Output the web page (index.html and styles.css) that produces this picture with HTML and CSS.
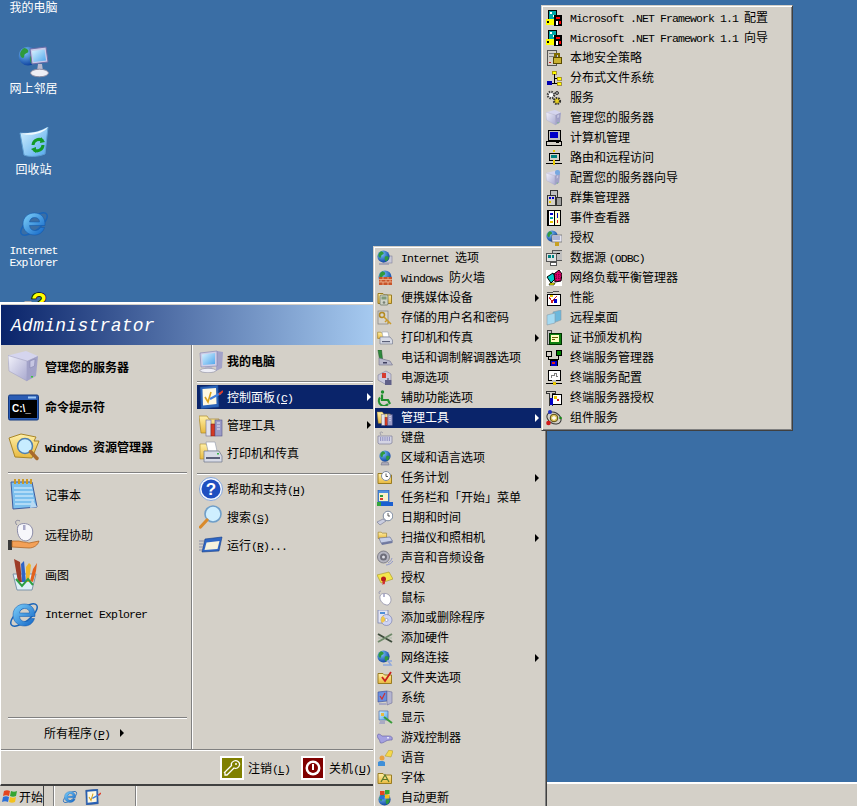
FILE: index.html
```html
<!DOCTYPE html>
<html lang="zh-CN">
<head>
    <meta charset="UTF-8">
    <meta name="viewport" content="width=device-width, initial-scale=1.0">
    <title>Windows Server 2003 开始菜单</title>
    <link rel="stylesheet" href="styles.css">
</head>
<body>
<svg class="defs" xmlns="http://www.w3.org/2000/svg">
    <defs>
        <radialGradient id="gGlobe" cx="35%" cy="30%" r="75%"><stop offset="0" stop-color="#7cc4f8"/><stop offset="1" stop-color="#0b3f9e"/></radialGradient>
        <linearGradient id="gIE" x1="0" y1="0" x2="1" y2="1"><stop offset="0" stop-color="#7fd2fb"/><stop offset="1" stop-color="#0f62c4"/></linearGradient>
        <linearGradient id="gLilac" x1="0" y1="0" x2="1" y2="1"><stop offset="0" stop-color="#f2f2fb"/><stop offset="1" stop-color="#a9a9cf"/></linearGradient>
        <linearGradient id="gScreen" x1="0" y1="0" x2="1" y2="1"><stop offset="0" stop-color="#d9f3ff"/><stop offset="1" stop-color="#4fa6ec"/></linearGradient>
        <linearGradient id="gFolder" x1="0" y1="0" x2="0" y2="1"><stop offset="0" stop-color="#fff0a8"/><stop offset="1" stop-color="#e8b93f"/></linearGradient>
    </defs>

    <!-- shared pieces -->
    <symbol id="globe" viewBox="0 0 16 16"><circle cx="8" cy="8" r="7.5" fill="url(#gGlobe)"/><path d="M5 1.5C7 2 9 3 8 5 7 6 5 6 5 8 5 10 3 10 2 8 1 5 3 2.5 5 1.5ZM10 8C12 7 14 8 14.5 9 14 12 12 14 10.5 14 9.5 12 9 9.5 10 8Z" fill="#2f9a3c"/></symbol>
    <symbol id="folder" viewBox="0 0 16 16"><path d="M1 13.500V3.500H6L7.500 5H14.500V13.500Z" fill="url(#gFolder)" stroke="#9a7c22"/></symbol>

    <!-- desktop and left column, 32px -->
    <symbol id="lg-net" viewBox="0 0 32 32"><use href="#globe" x="0" y="0" width="20" height="20"/><path d="M12 3L28 1 30 16 14 18Z" fill="#c9c9e8" stroke="#6d6da8"/><path d="M14 5L26.500 3.500 28 14.500 15.500 16Z" fill="url(#gScreen)"/><path d="M20 18H24L25 25H19Z" fill="#b8b8cc"/><ellipse cx="21.500" cy="27" rx="9" ry="3.800" fill="#eeeef5" stroke="#8a8aa0"/></symbol>
    <symbol id="lg-bin" viewBox="0 0 32 32"><path d="M2 6C12 7 22 5 30 0L27 27C20 30 10 30 6 28Z" fill="url(#gScreen)" stroke="#5f9fd2"/><path d="M2 6C12 7 22 5 30 0 26 7 10 10 2 6Z" fill="#eef9ff"/><path d="M15 18A6 6 0 0 1 25 14" fill="none" stroke="#139a26" stroke-width="3"/><path d="M25 18A6 6 0 0 1 16 23" fill="none" stroke="#139a26" stroke-width="3"/><path d="M23 10L27 15 22 16ZM18 26L13 22 18 20Z" fill="#139a26"/></symbol>
    <symbol id="lg-ie" viewBox="0 0 32 32"><ellipse cx="16" cy="16" rx="16" ry="6.500" transform="rotate(-38 16 16)" fill="none" stroke="#1a64b8" stroke-width="1.500"/><path fill-rule="evenodd" fill="url(#gIE)" stroke="#0e55a8" stroke-width=".5" d="M27 17.500H11.500C12 21 14 22.500 17 22.500 19.500 22.500 21.500 21.500 22.500 19.500H26.500C25 24.500 21 27 16.500 27 10 27 5 22.500 5 16 5 9.500 10 5 16.500 5 23 5 27.500 9.500 27 17.500ZM11.500 14H21.500C21.500 11 19.500 9.500 16.500 9.500 13.500 9.500 12 11.500 11.500 14Z"/></symbol>
    <symbol id="lg-help" viewBox="0 0 32 32"><rect x="6.500" y="12" width="7" height="20" fill="#a8a8a8"/></symbol>
    <symbol id="lg-server" viewBox="0 0 32 32"><path d="M0 4.500L18 0 30 5 19 10Z" fill="#d5d5ee"/><path d="M0 4.500L19 10V30L1 20Z" fill="url(#gLilac)" stroke="#9a9ac0" stroke-width=".5"/><path d="M19 10L30 5 28 25 19 30Z" fill="#a2a2c8"/><path d="M22 10L27 8 26.500 15 22 17Z" fill="#c6c6e2" stroke="#7f7fa8" stroke-width=".5"/><rect x="23" y="25" width="2" height="1.500" fill="#3bc43b"/></symbol>
    <symbol id="lg-cmd" viewBox="0 0 32 32"><rect x=".5" y="4" width="30" height="25" rx="1.500" fill="#2a5cb4" stroke="#153a80"/><rect x="2" y="9" width="27" height="18" fill="#000"/><rect x="20" y="5.500" width="8" height="2" fill="#9cc7f5"/></symbol>
    <symbol id="lg-explorer" viewBox="0 0 32 32"><path d="M1 7L13 3 28 6 26 10 31 10 24 27 7 26Z" fill="url(#gFolder)" stroke="#a98628"/><circle cx="17" cy="15" r="7.500" fill="#c7ecff" stroke="#4d7fb0" stroke-width="1.500"/><path d="M22.500 20.500L29 27.500" stroke="#a86a2c" stroke-width="3.500" stroke-linecap="round"/></symbol>
    <symbol id="lg-notepad" viewBox="0 0 32 32"><path d="M3 3H24L29 28 5 30Z" fill="#7cc0ee" stroke="#3d5da0"/><path d="M6 9H24M6 13H25M7 17H25M7 21H26M7 25H26" stroke="#e6f6ff"/><path d="M7 0V5M11 0V5M15 0V5M19 0V5M23 0V5" stroke="#c99a2a" stroke-width="2"/><path d="M24 20L29 28 22 29Z" fill="#b9d9f2"/></symbol>
    <symbol id="lg-assist" viewBox="0 0 32 32"><path d="M12 2C8 0 6 3 9 6" fill="none" stroke="#8a8a9c"/><path d="M10 7C13 3 22 4 24 9 26 14 24 21 18 22 11 22 8 13 10 7Z" fill="#f7f7fb" stroke="#8d8da8"/><rect x="15" y="6" width="2.500" height="5" fill="#a9a9c9"/><path d="M0 21H4V31H0Z" fill="#3a3a3a"/><path d="M4 22H11C13 23 18 23 21 24L31 22C30 26 26 29 21 29L4 28Z" fill="#f3a057" stroke="#a55c1c" stroke-width=".7"/></symbol>
    <symbol id="lg-paint" viewBox="0 0 32 32"><path d="M5 15H28L24 31H9Z" fill="#dfeff7" stroke="#7d94a8"/><path d="M6 0L12 3 14 23H10Z" fill="#9d3c28"/><path d="M13 5L16 2 18 23H14Z" fill="#2f64c7"/><path d="M18 23L18 8 21 4 23 6 21 23Z" fill="#f0b62c"/><path d="M22 22L25 10 29 4 28 12 25 23Z" fill="#e2621e"/><path d="M8 20L14 27 20 20 25 26" fill="none" stroke="#2ea043" stroke-width="2"/></symbol>

    <!-- right column, 24px -->
    <symbol id="md-computer" viewBox="0 0 24 24"><path d="M18 2L24 3 23 19 17 22Z" fill="#a2a2c8"/><path d="M1 4L18 2 18 17 2 18Z" fill="#cfcfe8" stroke="#7f7fae" stroke-width=".6"/><path d="M3 5.500L16 4 16 15 4 16Z" fill="url(#gScreen)"/><path d="M6 18H13L14 21H5Z" fill="#b6b6ca"/><ellipse cx="9" cy="21.500" rx="8" ry="2.200" fill="#eeeef6" stroke="#8a8aa0" stroke-width=".6"/></symbol>
    <symbol id="md-panel" viewBox="0 0 24 24"><path d="M1 2L19 0 20 22 2 24Z" fill="#2a63b8" stroke="#123c84" stroke-width=".6"/><path d="M3.500 4L17 3 17.500 19 4 20.500Z" fill="#fdf8e2"/><path d="M6 12L9 17 12 7" fill="none" stroke="#d9a21e" stroke-width="1.600"/><path d="M11 14L22 8" stroke="#3f7fdf" stroke-width="2"/><path d="M20 9.500L24 6" stroke="#e03d2a" stroke-width="2"/></symbol>
    <symbol id="md-tools" viewBox="0 0 24 24"><path d="M0 3H8L10 6H20V20H2Z" fill="url(#gFolder)" stroke="#a98628" stroke-width=".7"/><rect x="7" y="7" width="5" height="16" fill="#e2e2ec" stroke="#6d6d90" stroke-width=".6"/><rect x="12" y="11" width="4" height="12" fill="#d33a24" stroke="#7c1a10" stroke-width=".5"/><rect x="16" y="7" width="7" height="16" fill="#9a9ac6" stroke="#55558a" stroke-width=".6"/><path d="M18 10H21M18 13H21M18 16H21" stroke="#e6e6f5"/></symbol>
    <symbol id="md-printer" viewBox="0 0 24 24"><path d="M1 3H7L9 6V18H1Z" fill="url(#gFolder)" stroke="#a98628" stroke-width=".6"/><path d="M7 1H16L18 10H9Z" fill="#fff" stroke="#8d96a8" stroke-width=".6"/><path d="M5 10H20L23 15V21H5Z" fill="#d8dbe6" stroke="#6c7288" stroke-width=".7"/><rect x="7" y="16" width="14" height="2" fill="#5b6078"/><rect x="18" y="12" width="2" height="1.500" fill="#39b54a"/></symbol>
    <symbol id="md-help" viewBox="0 0 24 24"><circle cx="12" cy="12" r="11.500" fill="#f4f8ff" stroke="#6a94d8" stroke-width=".8"/><circle cx="12" cy="12" r="9.500" fill="#1f4fc0"/></symbol>
    <symbol id="md-search" viewBox="0 0 24 24"><circle cx="14" cy="9" r="8" fill="#cfefff" stroke="#6f9ec8" stroke-width="1.600"/><path d="M8 15L1.500 22" stroke="#d98a2c" stroke-width="3.200" stroke-linecap="round"/></symbol>
    <symbol id="md-run" viewBox="0 0 24 24"><path d="M6 6L23 4 20 18 3 19Z" fill="#2e66c4" stroke="#143c86" stroke-width=".6"/><path d="M7.500 9.500L20.500 8 18.500 16 5.500 17Z" fill="#f6f3de"/><path d="M0 8H5M0 11H4M0 14H4M0 17H3" stroke="#8a8fa8"/></symbol>
    <symbol id="key" viewBox="0 0 24 24"><rect width="24" height="24" fill="#fff"/><rect x="2" y="2" width="20" height="20" fill="#808000"/><path d="M14 5C17 4 20 6 19.500 9 19 12 16 13 14 12L7 19H5V17L4.500 16.500 11.500 9.500C11 7.500 12 5.700 14 5Z" fill="none" stroke="#fff" stroke-width="1.300"/><circle cx="16" cy="8" r="1" fill="#fff"/></symbol>
    <symbol id="power" viewBox="0 0 24 24"><rect width="24" height="24" fill="#fff"/><rect x="2" y="2" width="20" height="20" fill="#800000"/><circle cx="12" cy="12" r="7.500" fill="#fff"/><circle cx="12" cy="12" r="5" fill="#800000"/><rect x="11" y="8" width="2" height="6" fill="#fff"/></symbol>

    <!-- control panel list, 16px -->
    <symbol id="s-inet" viewBox="0 0 16 16"><rect x="6" y="6" width="9" height="7" fill="#c9c9d8" stroke="#7f7f9a" stroke-width=".6"/><use href="#globe" x="0" y="0" width="13" height="13"/><path d="M2 14H12" stroke="#9a9ab0" stroke-width="1.500"/></symbol>
    <symbol id="s-firewall" viewBox="0 0 16 16"><use href="#globe" x="1" y="0" width="14" height="14"/><rect x="2" y="7" width="13" height="8" fill="#c8542a"/><path d="M2 9.500H15M2 12H15M6 7V9.500M11 7V9.500M4 9.500V12M9 9.500V12M13 9.500V12M6 12V15M11 12V15" stroke="#f2c6a4" stroke-width=".7"/></symbol>
    <symbol id="s-media" viewBox="0 0 16 16"><use href="#folder"/><rect x="3" y="5" width="8" height="10" rx="1" fill="#cfd3c8" stroke="#5e6a5a" stroke-width=".7"/><rect x="4.500" y="6.500" width="5" height="3" fill="#7f9a78"/><circle cx="7" cy="12.500" r="1.300" fill="#7a8276"/></symbol>
    <symbol id="s-creds" viewBox="0 0 16 16"><rect x="1" y="1" width="10" height="13" fill="#d7d4cc" stroke="#7f7f7f" stroke-width=".7"/><circle cx="5" cy="5" r="2.500" fill="none" stroke="#b38a22" stroke-width="1.500"/><path d="M6.500 6.500L14 14M10 10L8 12M12 12L10.500 13.500" stroke="#c99a2a" stroke-width="1.500"/></symbol>
    <symbol id="s-printer" viewBox="0 0 16 16"><use href="#folder" width="10" height="10"/><path d="M5 2H11L12 7H6Z" fill="#fff" stroke="#8d96a8" stroke-width=".5"/><path d="M3 7H13L15.500 10V14H3Z" fill="#d8dbe6" stroke="#6c7288" stroke-width=".6"/><rect x="5" y="11" width="8" height="1.200" fill="#5b6078"/></symbol>
    <symbol id="s-phone" viewBox="0 0 16 16"><path d="M1 0H4.500L5.500 9H2.500Z" fill="#2e8a3c" stroke="#14501e" stroke-width=".5"/><path d="M2 8L13 11 15.500 15H2Z" fill="#b9b9cc" stroke="#6f6f8c" stroke-width=".6"/><rect x="6" y="12" width="4" height="1.500" fill="#3f3f5f"/></symbol>
    <symbol id="s-power" viewBox="0 0 16 16"><path d="M1 5L9 1 14 4 14 10 8 14 1 10Z" fill="#c9c9dc" stroke="#7c7c98" stroke-width=".6"/><rect x="5" y="3" width="4" height="5" fill="#d63c30"/><path d="M8 10H14.500V15H8Z" fill="#5f5f88"/><path d="M11 8V10" stroke="#3c3c50"/></symbol>
    <symbol id="s-access" viewBox="0 0 16 16"><circle cx="5.500" cy="2" r="1.700" fill="#1f8f2e"/><path d="M5 4.500V10H11L13 14" fill="none" stroke="#1f8f2e" stroke-width="2.200"/><path d="M3 7.500A5 5 0 1 0 11 14" fill="none" stroke="#1f8f2e" stroke-width="2"/></symbol>
    <symbol id="s-kbd" viewBox="0 0 16 16"><path d="M6 3C4 1 2 2 4 5" fill="none" stroke="#9a9aa8"/><path d="M1 6H15V13L13 14H2L1 13Z" fill="#d4d4e4" stroke="#7b7b98" stroke-width=".7"/><path d="M3 8H13M3 10H13" stroke="#5c5ca8" stroke-width="1.200" stroke-dasharray="1 .8"/></symbol>
    <symbol id="s-region" viewBox="0 0 16 16"><use href="#globe" x="2" y="0" width="12" height="12"/><path d="M5 12H11L12 15H4Z" fill="#a9a9b8" stroke="#6e6e80" stroke-width=".5"/></symbol>
    <symbol id="s-tasks" viewBox="0 0 16 16"><use href="#folder"/><circle cx="9" cy="6" r="4.500" fill="#fff" stroke="#7c8aa0"/><path d="M9 3.500V6.500H11" stroke="#333" fill="none" stroke-width=".8"/></symbol>
    <symbol id="s-taskbar" viewBox="0 0 16 16"><rect x="1" y="0" width="11" height="12" fill="#4d8fe0" stroke="#22509a" stroke-width=".6"/><rect x="2" y="3" width="9" height="8" fill="#f8f1c8"/><rect x="3" y="5" width="3" height="2" fill="#2f9a3c"/><rect x="3" y="8" width="3" height="2" fill="#d63c30"/><rect x="0" y="12" width="16" height="4" fill="#1b5fd0"/><rect x="0" y="12" width="4" height="4" fill="#31a53c"/></symbol>
    <symbol id="s-clock" viewBox="0 0 16 16"><circle cx="11" cy="6" r="4.800" fill="#fff" stroke="#7c8aa0"/><path d="M11 3V6H13" fill="none" stroke="#333" stroke-width=".8"/><path d="M0 12L6 9 9 11 3 15Z" fill="#c9cde0" stroke="#6f7390" stroke-width=".6"/></symbol>
    <symbol id="s-scanner" viewBox="0 0 16 16"><use href="#folder" width="11" height="10"/><path d="M2 8L13 7 15.500 11 4 13Z" fill="#c6cfe8" stroke="#5f6a90" stroke-width=".6"/><path d="M4 13L15.500 11V13L5 15Z" fill="#6f78a0"/></symbol>
    <symbol id="s-sound" viewBox="0 0 16 16"><circle cx="6.500" cy="7" r="6" fill="#b4b4c0" stroke="#63636f" stroke-width=".7"/><circle cx="6.500" cy="7" r="3.500" fill="#6e6e7a"/><circle cx="6.500" cy="7" r="1.500" fill="#dcdce4"/><path d="M11 13C13 12 14.500 10 15 8M9 15C12 15 15 13 15.800 11" fill="none" stroke="#7c86c8" stroke-width=".8"/></symbol>
    <symbol id="s-cert" viewBox="0 0 16 16"><path d="M0 5L12 2 16 9 4 13Z" fill="#f4e64c" stroke="#a49424" stroke-width=".6"/><circle cx="6.500" cy="9" r="2.500" fill="#b61c1c"/><path d="M5.500 11V15L7.500 13.500 8 15V11" fill="#d03030"/></symbol>
    <symbol id="s-mouse" viewBox="0 0 16 16"><path d="M4 1C2 1 1.500 2.500 2.500 4" fill="none" stroke="#9a9ab0"/><path d="M3 6C4 3 9 2.500 12 5 15 8 14.500 13 11 15 7 15.500 2 11 3 6Z" fill="#fff" stroke="#8f8fa8" stroke-width=".8"/><rect x="6" y="4" width="2" height="3" fill="#b5b5d0"/></symbol>
    <symbol id="s-addrem" viewBox="0 0 16 16"><rect x="1" y="0" width="10" height="13" fill="#e4e4f2" stroke="#6c78a8" stroke-width=".7"/><rect x="3" y="2" width="5" height="2" fill="#4f8fd8"/><circle cx="9.500" cy="10" r="5.500" fill="#cfd4f2" stroke="#6f74a8" stroke-width=".6"/><path d="M9.500 10L6 5.800A5.500 5.500 0 0 0 5 13Z" fill="#f2c84a"/><circle cx="9.500" cy="10" r="1.500" fill="#fff" stroke="#6f74a8" stroke-width=".5"/></symbol>
    <symbol id="s-hw" viewBox="0 0 16 16"><path d="M1 4L15 12" stroke="#3e4c3c" stroke-width="2"/><path d="M1 12L15 4" stroke="#6f8a6a" stroke-width="2"/><path d="M1 8H5M11 8H15" stroke="#a8b8a4"/></symbol>
    <symbol id="s-netconn" viewBox="0 0 16 16"><use href="#globe" x="0" y="0" width="13" height="13"/><path d="M6 15H14L11 11H15" fill="none" stroke="#8fa8dc" stroke-width="1.500"/></symbol>
    <symbol id="s-folderopt" viewBox="0 0 16 16"><use href="#folder"/><path d="M5 7L8 11 14 2" fill="none" stroke="#c8201c" stroke-width="1.800"/></symbol>
    <symbol id="s-system" viewBox="0 0 16 16"><path d="M1 2L10 1V11L1 12Z" fill="#6a8fe0" stroke="#3a4a90" stroke-width=".6"/><path d="M3 6L5 9 8 3" fill="none" stroke="#d03030" stroke-width="1.200"/><path d="M10 1L15 2V13L10 15Z" fill="#b5b5d0" stroke="#6e6e98" stroke-width=".6"/><path d="M2 13H9V15H2Z" fill="#a9a9c4"/></symbol>
    <symbol id="s-display" viewBox="0 0 16 16"><path d="M2 1H11V10H2Z" fill="url(#gScreen)" stroke="#4f6fae" stroke-width=".7"/><rect x="4" y="3" width="3" height="3" fill="#e8b93f"/><path d="M7 7L15 13" stroke="#3a9c3a" stroke-width="2"/><path d="M3 11H8V14H2Z" fill="#a9a9c4"/></symbol>
    <symbol id="s-game" viewBox="0 0 16 16"><path d="M0 6C1 3 3 4 5 6H12C14 6 16 7 15 10 13 10 11 10 9 11 6 13 3 14 3 12 3 10 1 9 0 6Z" fill="#a4a0e0" stroke="#5f5ba0" stroke-width=".6"/><rect x="10" y="7" width="2" height="1.500" fill="#e6e6fa"/></symbol>
    <symbol id="s-speech" viewBox="0 0 16 16"><circle cx="5" cy="8" r="2.500" fill="#e8a040"/><path d="M1 16V12C2 10.500 7 10.500 8 12V16Z" fill="#3f8fd8"/><path d="M8 6L12 0 16 1 14 7Z" fill="#f4d84c" stroke="#a8922a" stroke-width=".5"/></symbol>
    <symbol id="s-fonts" viewBox="0 0 16 16"><use href="#folder"/><path d="M4 12L8 5 12 12M6 9.500H10" fill="none" stroke="#5a7a2a" stroke-width="1.200"/></symbol>
    <symbol id="s-update" viewBox="0 0 16 16"><use href="#globe" x="1" y="3" width="13" height="13"/><rect x="3" y="1" width="4.500" height="4" fill="#e3451f"/><rect x="8" y="0" width="4.500" height="4" fill="#35a533"/><rect x="3" y="5.500" width="4.500" height="4" fill="#2a6fd8"/><rect x="8" y="4.500" width="4.500" height="4" fill="#f4c21d"/></symbol>

    <!-- administrative tools list, 16 colour look -->
    <symbol id="o-net" viewBox="0 0 16 16" shape-rendering="crispEdges"><rect x="2" y="0" width="8" height="9" fill="#00a8a8" stroke="#000"/><rect x="4" y="2" width="2" height="2" fill="#fff"/><rect x="7" y="5" width="2" height="2" fill="#fff"/><rect x="0" y="9" width="8" height="6" fill="#ff0"/><rect x="8" y="5" width="8" height="11" fill="#000"/><rect x="10" y="7" width="4" height="2" fill="#f00"/><rect x="10" y="11" width="2" height="4" fill="#fff"/><rect x="13" y="11" width="2" height="3" fill="#f00"/><rect x="1" y="11" width="2" height="2" fill="#000"/></symbol>
    <symbol id="o-seclocal" viewBox="0 0 16 16" shape-rendering="crispEdges"><rect x="1" y="0" width="9" height="15" fill="#d4d0c8" stroke="#555"/><rect x="3" y="12" width="2" height="1" fill="#d02020"/><path d="M3 3H8M3 6H8" stroke="#808080"/><rect x="7" y="7" width="8" height="6" fill="#c8b030" stroke="#5a4a00"/><path d="M9 7V4H13V7" fill="none" stroke="#806c00" stroke-width="1.500"/></symbol>
    <symbol id="o-dfs" viewBox="0 0 16 16" shape-rendering="crispEdges"><rect x="1" y="11" width="5" height="4" fill="#0000b0"/><rect x="6" y="1" width="4" height="3" fill="#ff0" stroke="#806000" stroke-width=".6"/><rect x="11" y="7" width="4" height="3" fill="#ff0" stroke="#806000" stroke-width=".6"/><rect x="11" y="12" width="4" height="3" fill="#ff0" stroke="#806000" stroke-width=".6"/><path d="M8 4V13H11M8 8.500H11M6 13H8" stroke="#000" fill="none"/></symbol>
    <symbol id="o-svc" viewBox="0 0 16 16"><circle cx="5" cy="5" r="3.200" fill="#fff" stroke="#444" stroke-width="2.200" stroke-dasharray="1.500 1"/><circle cx="11" cy="11" r="3" fill="#e8d020" stroke="#333" stroke-width="2.200" stroke-dasharray="1.500 1"/><circle cx="11" cy="3" r="1.500" fill="#aaa" stroke="#333"/></symbol>
    <symbol id="o-compmgmt" viewBox="0 0 16 16" shape-rendering="crispEdges"><rect x="2" y="0" width="12" height="10" fill="#c0c0c0" stroke="#000"/><rect x="4" y="2" width="8" height="6" fill="#0000c8"/><rect x="0" y="11" width="15" height="4" fill="#d4d0c8" stroke="#000"/><rect x="10" y="12" width="3" height="1" fill="#000"/></symbol>
    <symbol id="o-route" viewBox="0 0 16 16" shape-rendering="crispEdges"><rect x="7" y="0" width="2" height="2" fill="#e8c800"/><rect x="3" y="3" width="10" height="7" fill="#d4d0c8" stroke="#000"/><rect x="5" y="5" width="6" height="3" fill="#008080"/><rect x="0" y="13" width="16" height="1" fill="#000"/><rect x="7" y="10" width="2" height="5" fill="#e8c800"/></symbol>
    <symbol id="o-srvwiz" viewBox="0 0 16 16"><use href="#lg-server" width="15" height="15" y="1"/><rect x="9" y="0" width="5" height="5" rx="2" fill="#78a8e0"/></symbol>
    <symbol id="o-cluster" viewBox="0 0 16 16" shape-rendering="crispEdges"><rect x="4" y="0" width="7" height="7" fill="#c0c0c0" stroke="#333"/><rect x="1" y="5" width="8" height="10" fill="#d4d0c8" stroke="#333"/><rect x="3" y="7" width="2" height="2" fill="#0000c8"/><rect x="6" y="7" width="2" height="2" fill="#0000c8"/><rect x="3" y="11" width="2" height="2" fill="#e8c800"/><rect x="10" y="7" width="5" height="8" fill="#a0a0a0" stroke="#333"/></symbol>
    <symbol id="o-event" viewBox="0 0 16 16" shape-rendering="crispEdges"><rect x="1" y="0" width="14" height="16" fill="#000"/><rect x="3" y="1" width="5" height="14" fill="#fff"/><rect x="9" y="1" width="5" height="14" fill="#ffffd0"/><rect x="4" y="3" width="3" height="2" fill="#0000d0"/><rect x="4" y="7" width="3" height="2" fill="#00a0a0"/><rect x="4" y="11" width="3" height="2" fill="#e8c800"/><rect x="11" y="3" width="1" height="5" fill="#0000d0"/><rect x="11" y="10" width="1" height="3" fill="#d02020"/></symbol>
    <symbol id="o-lic" viewBox="0 0 16 16"><use href="#globe" width="12" height="12"/><rect x="6" y="5" width="10" height="7" fill="#e4e4f0" stroke="#555" stroke-width=".6"/><path d="M7 7H14M7 9H14" stroke="#4860a8" stroke-width=".7"/><rect x="9" y="12" width="4" height="4" fill="#c8a020"/></symbol>
    <symbol id="o-odbc" viewBox="0 0 16 16" shape-rendering="crispEdges"><rect x="6" y="0" width="10" height="10" fill="#c0c0c0" stroke="#555"/><rect x="0" y="3" width="10" height="8" fill="#e0e0e0" stroke="#555"/><rect x="2" y="5" width="3" height="3" fill="#008080"/><rect x="6" y="5" width="2" height="3" fill="#008080"/><rect x="4" y="12" width="6" height="3" fill="#fff" stroke="#555"/><rect x="11" y="3" width="3" height="1" fill="#000"/></symbol>
    <symbol id="o-nlb" viewBox="0 0 16 16"><rect width="16" height="16" fill="#fff"/><path d="M1 7L7 3 10 8 5 13Z" fill="#00c8c8" stroke="#000"/><path d="M8 4L13 0 16 4 15 11 9 12Z" fill="#e0006c" stroke="#000"/><path d="M10 2V11M13 2V11M8 5H15M8 8H15" stroke="#000" stroke-width=".5" stroke-dasharray="1 1"/><path d="M4 13L9 13 8 15H3Z" fill="#ff0" stroke="#000" stroke-width=".6"/></symbol>
    <symbol id="o-perf" viewBox="0 0 16 16" shape-rendering="crispEdges"><path d="M1 3L13 1" stroke="#555"/><rect x="1" y="4" width="13" height="11" fill="#fff" stroke="#000"/><path d="M3 7L7 13M11 6L5 13" stroke="#d02020"/><rect x="8" y="9" width="3" height="4" fill="#0000c8"/><rect x="4" y="5" width="3" height="2" fill="#e8c800"/></symbol>
    <symbol id="o-rdp" viewBox="0 0 16 16"><path d="M7 2L15 0V10L7 13Z" fill="#6cb8dc" stroke="#8a9ca8" stroke-width=".6"/><path d="M1 5L9 3V13L1 15Z" fill="#a4daf2" stroke="#8a9ca8" stroke-width=".6"/></symbol>
    <symbol id="o-ca" viewBox="0 0 16 16" shape-rendering="crispEdges"><rect x="1" y="0" width="4" height="14" fill="#c0c0c0" stroke="#444"/><rect x="3" y="3" width="12" height="11" fill="#108010" stroke="#003000"/><rect x="5" y="5" width="8" height="7" fill="#ffffc0"/><path d="M6 7H12M6 9H9" stroke="#606000"/></symbol>
    <symbol id="o-tsm" viewBox="0 0 16 16" shape-rendering="crispEdges"><rect x="0" y="1" width="5" height="5" fill="#d4d0c8" stroke="#000"/><rect x="10" y="0" width="5" height="5" fill="#008000" stroke="#000"/><path d="M2 6V9H12V5M7 9V11" stroke="#000" fill="none"/><rect x="4" y="10" width="7" height="6" fill="#0000c8" stroke="#000"/><rect x="6" y="12" width="3" height="2" fill="#e02020"/></symbol>
    <symbol id="o-tsc" viewBox="0 0 16 16" shape-rendering="crispEdges"><rect x="2" y="0" width="12" height="10" fill="#fff" stroke="#000"/><path d="M5 8V5H8V3H10V6H12" stroke="#808080" fill="none"/><rect x="0" y="13" width="16" height="1" fill="#000"/><rect x="6" y="10" width="4" height="3" fill="#c0c0c0"/><rect x="7" y="12" width="3" height="3" fill="#e8c800"/></symbol>
    <symbol id="o-tsl" viewBox="0 0 16 16" shape-rendering="crispEdges"><path d="M0 1H9V3H6V16H3V3H0Z" fill="#d4d0c8" stroke="#333"/><rect x="6" y="4" width="9" height="10" fill="#fff" stroke="#000"/><rect x="8" y="6" width="3" height="3" fill="#e8c800"/><rect x="4" y="8" width="3" height="7" fill="#0000c8"/><rect x="11" y="9" width="2" height="2" fill="#d02020"/></symbol>
    <symbol id="o-com" viewBox="0 0 16 16"><ellipse cx="8" cy="8" rx="7.500" ry="5.500" transform="rotate(30 8 8)" fill="none" stroke="#333"/><circle cx="8" cy="8" r="3.800" fill="#e0c860" stroke="#5a4a10"/><path d="M8 6V10M6 8H10" stroke="#fff" stroke-width="1.300"/><circle cx="4" cy="2" r="2" fill="#2030c0"/><circle cx="2.500" cy="13" r="2.300" fill="#d01818"/><circle cx="14.500" cy="8" r="1.300" fill="#148a14"/></symbol>
    <symbol id="flag" viewBox="0 0 16 16"><path d="M2 2C4 1 6 1 8 2L7 7C5 6 3 6 1 7Z" fill="#e3451f"/><path d="M9 2C11 3 13 3 15 2L14 7C12 8 10 8 8 7Z" fill="#35a533"/><path d="M1 8C3 7 5 7 7 8L6 13C4 12 2 12 0 13Z" fill="#2a6fd8"/><path d="M8 8C10 9 12 9 14 8L13 13C11 14 9 14 7 13Z" fill="#f4c21d"/></symbol>
</svg>

<div class="desktop">
    <div class="shortcuts">
        <div class="shortcut shortcut-top"><span>我的电脑</span></div>
        <div class="shortcut"><svg class="ico32"><use href="#lg-net"/></svg><span>网上邻居</span></div>
        <div class="shortcut"><svg class="ico32"><use href="#lg-bin"/></svg><span>回收站</span></div>
        <div class="shortcut"><svg class="ico32"><use href="#lg-ie"/></svg><span class="lat twoline">Internet Explorer</span></div>
        <div class="shortcut"><svg class="ico32"><use href="#lg-help"/><text x="13" y="22" class="helpmark">?</text></svg></div>
    </div>

    <div class="taskbar">
        <div class="startbtn"><svg class="ico16"><use href="#flag"/></svg><span>开始</span></div>
        <div class="grip"></div>
        <div class="quick">
            <svg class="ico16"><use href="#lg-ie"/></svg>
            <svg class="ico16"><use href="#md-panel"/></svg>
        </div>
        <div class="grip"></div>
    </div>

    <div class="startmenu">
        <div class="banner">Administrator</div>
        <div class="panes">
            <div class="pane-left">
                <div class="prog strong"><svg class="ico32"><use href="#lg-server"/></svg><span>管理您的服务器</span></div>
                <div class="prog strong"><svg class="ico32"><use href="#lg-cmd"/><text x="4" y="21" class="cmdmark">C:\_</text></svg><span>命令提示符</span></div>
                <div class="prog strong"><svg class="ico32"><use href="#lg-explorer"/></svg><span><span class="lat">Windows </span>资源管理器</span></div>
                <div class="rule rule-prog"></div>
                <div class="prog"><svg class="ico32"><use href="#lg-notepad"/></svg><span>记事本</span></div>
                <div class="prog"><svg class="ico32"><use href="#lg-assist"/></svg><span>远程协助</span></div>
                <div class="prog"><svg class="ico32"><use href="#lg-paint"/></svg><span>画图</span></div>
                <div class="prog"><svg class="ico32"><use href="#lg-ie"/></svg><span class="lat">Internet Explorer</span></div>
                <div class="rule rule-all"></div>
                <div class="allprogs"><span>所有程序<span class="lat">(<u>P</u>)</span></span><i class="tri"></i></div>
            </div>
            <div class="pane-right">
                <div class="place strong"><svg class="ico24"><use href="#md-computer"/></svg><span>我的电脑</span></div>
                <div class="rule"></div>
                <div class="place on"><svg class="ico24"><use href="#md-panel"/></svg><span>控制面板<span class="lat">(<u>C</u>)</span></span><i class="tri"></i></div>
                <div class="place"><svg class="ico24"><use href="#md-tools"/></svg><span>管理工具</span><i class="tri"></i></div>
                <div class="place"><svg class="ico24"><use href="#md-printer"/></svg><span>打印机和传真</span></div>
                <div class="rule"></div>
                <div class="place"><svg class="ico24"><use href="#md-help"/><text x="12" y="18" class="helpglyph">?</text></svg><span>帮助和支持<span class="lat">(<u>H</u>)</span></span></div>
                <div class="place"><svg class="ico24"><use href="#md-search"/></svg><span>搜索<span class="lat">(<u>S</u>)</span></span></div>
                <div class="place"><svg class="ico24"><use href="#md-run"/></svg><span>运行<span class="lat">(<u>R</u>)...</span></span></div>
            </div>
        </div>
        <div class="logoff">
            <div class="logoff-btn"><svg class="ico24"><use href="#key"/></svg><span>注销<span class="lat">(<u>L</u>)</span></span></div>
            <div class="logoff-btn"><svg class="ico24"><use href="#power"/></svg><span>关机<span class="lat">(<u>U</u>)</span></span></div>
        </div>
    </div>

    <ul class="menu menu-panel">
        <li><svg class="ico16"><use href="#s-inet"/></svg><span><span class="lat">Internet </span>选项</span></li>
        <li><svg class="ico16"><use href="#s-firewall"/></svg><span><span class="lat">Windows </span>防火墙</span></li>
        <li><svg class="ico16"><use href="#s-media"/></svg><span>便携媒体设备</span><i class="tri"></i></li>
        <li><svg class="ico16"><use href="#s-creds"/></svg><span>存储的用户名和密码</span></li>
        <li><svg class="ico16"><use href="#s-printer"/></svg><span>打印机和传真</span><i class="tri"></i></li>
        <li><svg class="ico16"><use href="#s-phone"/></svg><span>电话和调制解调器选项</span></li>
        <li><svg class="ico16"><use href="#s-power"/></svg><span>电源选项</span></li>
        <li><svg class="ico16"><use href="#s-access"/></svg><span>辅助功能选项</span></li>
        <li class="on"><svg class="ico16"><use href="#md-tools"/></svg><span>管理工具</span><i class="tri"></i></li>
        <li><svg class="ico16"><use href="#s-kbd"/></svg><span>键盘</span></li>
        <li><svg class="ico16"><use href="#s-region"/></svg><span>区域和语言选项</span></li>
        <li><svg class="ico16"><use href="#s-tasks"/></svg><span>任务计划</span><i class="tri"></i></li>
        <li><svg class="ico16"><use href="#s-taskbar"/></svg><span>任务栏和「开始」菜单</span></li>
        <li><svg class="ico16"><use href="#s-clock"/></svg><span>日期和时间</span></li>
        <li><svg class="ico16"><use href="#s-scanner"/></svg><span>扫描仪和照相机</span><i class="tri"></i></li>
        <li><svg class="ico16"><use href="#s-sound"/></svg><span>声音和音频设备</span></li>
        <li><svg class="ico16"><use href="#s-cert"/></svg><span>授权</span></li>
        <li><svg class="ico16"><use href="#s-mouse"/></svg><span>鼠标</span></li>
        <li><svg class="ico16"><use href="#s-addrem"/></svg><span>添加或删除程序</span></li>
        <li><svg class="ico16"><use href="#s-hw"/></svg><span>添加硬件</span></li>
        <li><svg class="ico16"><use href="#s-netconn"/></svg><span>网络连接</span><i class="tri"></i></li>
        <li><svg class="ico16"><use href="#s-folderopt"/></svg><span>文件夹选项</span></li>
        <li><svg class="ico16"><use href="#s-system"/></svg><span>系统</span></li>
        <li><svg class="ico16"><use href="#s-display"/></svg><span>显示</span></li>
        <li><svg class="ico16"><use href="#s-game"/></svg><span>游戏控制器</span></li>
        <li><svg class="ico16"><use href="#s-speech"/></svg><span>语音</span></li>
        <li><svg class="ico16"><use href="#s-fonts"/></svg><span>字体</span></li>
        <li><svg class="ico16"><use href="#s-update"/></svg><span>自动更新</span></li>
    </ul>

    <ul class="menu menu-admin">
        <li><svg class="ico16"><use href="#o-net"/></svg><span><span class="lat">Microsoft .NET Framework 1.1 </span>配置</span></li>
        <li><svg class="ico16"><use href="#o-net"/></svg><span><span class="lat">Microsoft .NET Framework 1.1 </span>向导</span></li>
        <li><svg class="ico16"><use href="#o-seclocal"/></svg><span>本地安全策略</span></li>
        <li><svg class="ico16"><use href="#o-dfs"/></svg><span>分布式文件系统</span></li>
        <li><svg class="ico16"><use href="#o-svc"/></svg><span>服务</span></li>
        <li><svg class="ico16"><use href="#lg-server"/></svg><span>管理您的服务器</span></li>
        <li><svg class="ico16"><use href="#o-compmgmt"/></svg><span>计算机管理</span></li>
        <li><svg class="ico16"><use href="#o-route"/></svg><span>路由和远程访问</span></li>
        <li><svg class="ico16"><use href="#o-srvwiz"/></svg><span>配置您的服务器向导</span></li>
        <li><svg class="ico16"><use href="#o-cluster"/></svg><span>群集管理器</span></li>
        <li><svg class="ico16"><use href="#o-event"/></svg><span>事件查看器</span></li>
        <li><svg class="ico16"><use href="#o-lic"/></svg><span>授权</span></li>
        <li><svg class="ico16"><use href="#o-odbc"/></svg><span>数据源 <span class="lat">(ODBC)</span></span></li>
        <li><svg class="ico16"><use href="#o-nlb"/></svg><span>网络负载平衡管理器</span></li>
        <li><svg class="ico16"><use href="#o-perf"/></svg><span>性能</span></li>
        <li><svg class="ico16"><use href="#o-rdp"/></svg><span>远程桌面</span></li>
        <li><svg class="ico16"><use href="#o-ca"/></svg><span>证书颁发机构</span></li>
        <li><svg class="ico16"><use href="#o-tsm"/></svg><span>终端服务管理器</span></li>
        <li><svg class="ico16"><use href="#o-tsc"/></svg><span>终端服务配置</span></li>
        <li><svg class="ico16"><use href="#o-tsl"/></svg><span>终端服务器授权</span></li>
        <li><svg class="ico16"><use href="#o-com"/></svg><span>组件服务</span></li>
    </ul>
</div>
</body>
</html>
```

FILE: styles.css
```css
html, body {
    margin: 0;
    height: 100%;
    overflow: hidden;
}
body {
    font-family: "Noto Sans CJK SC", "Liberation Sans", sans-serif;
    font-size: 12px;
    line-height: 12px;
    color: #000;
}
svg { display: block; flex: none; overflow: visible; }
.defs { position: absolute; width: 0; height: 0; }
.ico32 { width: 32px; height: 32px; }
.ico24 { width: 24px; height: 24px; }
.ico16 { width: 16px; height: 16px; }

/* svg text */
.cmdmark { font: bold 10px "Liberation Sans", sans-serif; fill: #fff; }
.helpglyph { font: bold 17px "Liberation Sans", sans-serif; fill: #fff; text-anchor: middle; }
.helpmark { font: bold 26px "Liberation Sans", sans-serif; fill: #ff0; stroke: #000; stroke-width: 1.5px; paint-order: stroke; }

/* latin runs, half a cjk cell wide */
.lat {
    font-family: "Liberation Mono", monospace;
    font-size: 11.5px;
    line-height: 0;
    letter-spacing: -.9px;
}

.desktop {
    position: relative;
    width: 857px;
    height: 806px;
    background: #3a6ea5;
    overflow: hidden;
}

/* desktop icons */
.shortcuts {
    position: absolute;
    top: 1px;
    left: 0;
    width: 67px;
}
.shortcut {
    height: 81px;
    display: flex;
    flex-direction: column;
    align-items: center;
    gap: 4px;
    color: #fff;
    text-align: center;
}
.shortcut-top { height: 45px; }
.twoline {
    display: block;
    width: 50px;
    margin-top: 1px;
    line-height: 12px;
}

/* taskbar */
.taskbar {
    position: absolute;
    left: 0;
    right: 0;
    bottom: 0;
    height: 24px;
    box-sizing: border-box;
    background: #d4d0c8;
    border-top: 2px solid #fff;
    padding-top: 2px;
    display: flex;
}
.startbtn {
    width: 44px;
    height: 20px;
    box-sizing: border-box;
    padding: 2px 0 0 2px;
    display: flex;
    align-items: center;
    gap: 1px;
    border-right: 1px solid #404040;
}
.grip {
    width: 0;
    height: 20px;
    border-left: 1px solid #808080;
    border-right: 1px solid #fff;
    margin-left: 9px;
}
.quick {
    width: 64px;
    margin-left: 7px;
    padding-top: 1px;
    display: flex;
    align-items: center;
    gap: 7px;
}

/* start menu */
.startmenu {
    position: absolute;
    left: 0;
    top: 302px;
    width: 373px;
    height: 484px;
    box-sizing: border-box;
    padding-top: 1px;
    background: #d4d0c8;
    border-top: 2px solid #fff;
    border-left: 1px solid #fff;
    border-bottom: 2px solid #404040;
    display: flex;
    flex-direction: column;
}
.banner {
    flex: none;
    height: 40px;
    padding-left: 10px;
    background: linear-gradient(to right, #0a246a, #a6caf0);
    color: #fff;
    font: italic 18px/43px "Liberation Mono", monospace;
    letter-spacing: .27px;
}
.panes {
    flex: none;
    height: 404px;
    display: flex;
    border-bottom: 1px solid #808080;
    box-shadow: 0 1px #fff;
}
.rule {
    flex: none;
    height: 1px;
    background: #808080;
    border-bottom: 1px solid #fff;
}
.pane-left {
    width: 191px;
    box-sizing: border-box;
    padding: 6px 4px 4px 7px;
    border-right: 1px solid #808080;
    display: flex;
    flex-direction: column;
    gap: 8px;
}
.rule-prog { margin: 1px 0 -3px; }
.rule-all { margin: auto 0 -6px; }
.prog {
    height: 32px;
    flex: none;
    display: flex;
    align-items: center;
    gap: 5px;
}
.strong { font-weight: 700; }
.allprogs {
    height: 24px;
    flex: none;
    padding-left: 36px;
    display: flex;
    align-items: center;
    gap: 10px;
}
.pane-right {
    flex: 1;
    box-sizing: border-box;
    padding: 4px 0 0 4px;
    border-left: 1px solid #fff;
    display: flex;
    flex-direction: column;
    gap: 4px;
}
.pane-right .rule { margin: 4px 0 -2px; }
.place {
    height: 24px;
    flex: none;
    padding: 0 2px;
    display: flex;
    align-items: center;
    gap: 4px;
}
.on {
    background: #0a246a;
    color: #fff;
}
.tri {
    flex: none;
    width: 0;
    height: 0;
    border-left: 4px solid currentColor;
    border-top: 4px solid transparent;
    border-bottom: 4px solid transparent;
}
.place .tri { margin-left: auto; }
.logoff {
    flex: 1;
    margin-top: 1px;
    padding-right: 2px;
    display: flex;
    justify-content: flex-end;
    align-items: center;
    gap: 11px;
}
.logoff-btn {
    display: flex;
    align-items: center;
    gap: 4px;
}

/* cascading menus */
.menu {
    position: absolute;
    margin: 0;
    padding: 1px;
    list-style: none;
    box-sizing: border-box;
    background: #d4d0c8;
    border: 1px solid;
    border-color: #d4d0c8 #404040 #404040 #d4d0c8;
    box-shadow: inset 1px 1px #fff, inset -1px -1px #808080;
}
.menu li {
    height: 20px;
    display: flex;
    align-items: center;
    gap: 8px;
    padding: 0 6px 0 2px;
}
.menu li > span { margin-bottom: 2px; }
.menu .tri { margin-left: auto; }
.menu-panel {
    left: 373px;
    top: 246px;
    width: 174px;
}
.menu-admin {
    left: 541px;
    top: 5px;
    width: 252px;
    padding: 2px 1px;
}
.menu-admin li { padding-left: 3px; }
```
